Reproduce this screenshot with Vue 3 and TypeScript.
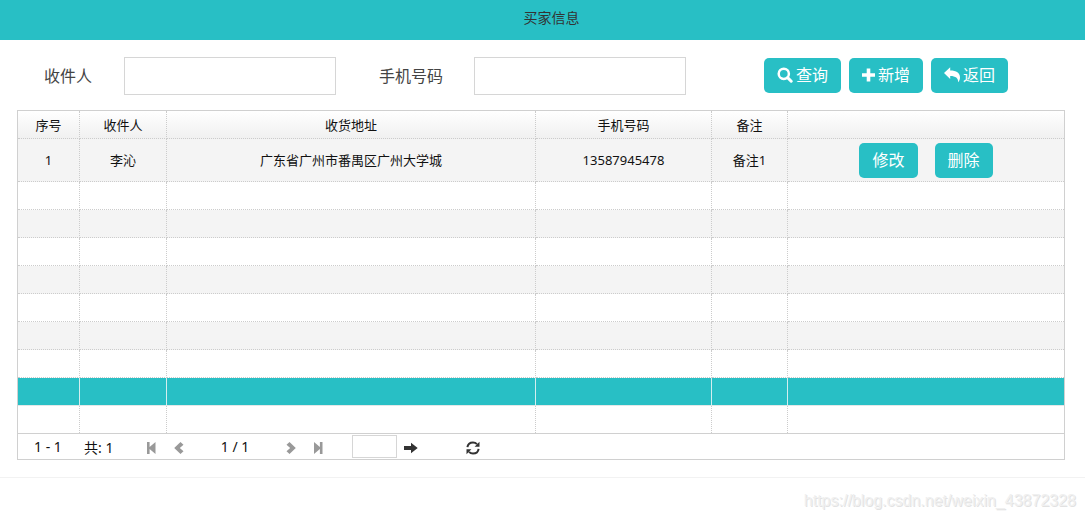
<script setup lang="ts">
import { ref } from 'vue'

interface Buyer {
  id: number
  name: string
  address: string
  phone: string
  remark: string
}

const recipient = ref('')
const phone = ref('')
const targetPage = ref('')
const highlighted = 8
const blankRows = 9
const columns: string[] = ['序号', '收件人', '收货地址', '手机号码', '备注', '']
const buyers: Buyer[] = [
  { id: 1, name: '李沁', address: '广东省广州市番禺区广州大学城', phone: '13587945478', remark: '备注1' },
]
</script>

<template>
  <div class="page">
    <header class="title-bar"><h1>买家信息</h1></header>

    <form class="search" @submit.prevent>
      <label for="recipient">收件人</label>
      <input id="recipient" v-model="recipient" type="text" />
      <label for="phone" class="second">手机号码</label>
      <input id="phone" v-model="phone" type="text" />
      <div class="tools">
        <button type="submit" class="btn">
          <svg width="16" height="16" viewBox="0 0 16 16" aria-hidden="true">
            <circle cx="6.8" cy="6.8" r="5.1" fill="none" stroke="#fff" stroke-width="2.5" />
            <path d="M10.6 10.6 14.2 14.2" stroke="#fff" stroke-width="3" stroke-linecap="round" />
          </svg>查询
        </button>
        <button type="button" class="btn">
          <svg width="13" height="16" viewBox="0 0 13 16" aria-hidden="true">
            <path d="M4.7 1.5h3.6v4.7H13v3.6H8.3v4.7H4.7V9.8H0V6.2h4.7z" fill="#fff" />
          </svg>新增
        </button>
        <button type="button" class="btn">
          <svg width="16" height="16" viewBox="0 0 16 16" aria-hidden="true">
            <path d="M0 5.9 6.2.2v3.400c6.200 0 9.800 2.400 9.800 6.900 0 1.900-.6 3.300-1.900 4.700.3-4.300-2.500-6.200-7.900-6.300v3.200z" fill="#fff" />
          </svg>返回
        </button>
      </div>
    </form>

    <section class="panel">
      <table>
        <colgroup>
          <col class="c-no" /><col class="c-name" /><col class="c-address" />
          <col class="c-phone" /><col class="c-remark" /><col class="c-actions" />
        </colgroup>
        <thead>
          <tr><th v-for="(column, i) in columns" :key="i" scope="col">{{ column }}</th></tr>
        </thead>
        <tbody>
          <tr v-for="buyer in buyers" :key="buyer.id" class="filled">
            <td>{{ buyer.id }}</td>
            <td>{{ buyer.name }}</td>
            <td>{{ buyer.address }}</td>
            <td>{{ buyer.phone }}</td>
            <td>{{ buyer.remark }}</td>
            <td>
              <div class="actions">
                <button type="button" class="btn">修改</button>
                <button type="button" class="btn">删除</button>
              </div>
            </td>
          </tr>
          <tr v-for="n in blankRows" :key="'blank' + n" :class="{ active: n === highlighted }">
            <td v-for="(column, i) in columns" :key="i"></td>
          </tr>
        </tbody>
      </table>

      <nav class="pager" aria-label="分页">
        <span class="range">1 - 1</span>
        <span class="total">共: 1</span>
        <button type="button" class="icon" aria-label="首页">
          <svg width="10" height="12" viewBox="0 0 10 12"><path d="M1 0h2.600v5L9.500 0v12L3.600 7v5H1z" fill="#999" /></svg>
        </button>
        <button type="button" class="icon prev" aria-label="上一页">
          <svg width="10" height="12" viewBox="0 0 10 12"><path d="M6.500 0 9.500 2.700 5.800 6 9.500 9.300 6.500 12 .2 6z" fill="#999" /></svg>
        </button>
        <span class="current">1 / 1</span>
        <button type="button" class="icon" aria-label="下一页">
          <svg width="10" height="12" viewBox="0 0 10 12"><path d="M3.500 0 .5 2.700 4.200 6 .5 9.300 3.500 12 9.800 6z" fill="#999" /></svg>
        </button>
        <button type="button" class="icon last" aria-label="末页">
          <svg width="10" height="12" viewBox="0 0 10 12"><path d="M9.500 0H6.900v5L1 0v12l5.900-5v5h2.600z" fill="#999" /></svg>
        </button>
        <input v-model="targetPage" type="text" aria-label="页码" />
        <button type="button" class="icon go" aria-label="跳转">
          <svg width="14" height="12" viewBox="0 0 14 12"><path d="M0 4h7V.7L13.700 6 7 11.300V8H0z" fill="#333" /></svg>
        </button>
        <button type="button" class="icon refresh" aria-label="刷新">
          <svg width="14" height="14" viewBox="0 0 14 14">
            <path d="M1.400 6.200C1.800 3.300 4.200 1.500 7 1.500c1.700 0 3 .6 4 1.600M12.600 7.800C12.200 10.700 9.800 12.500 7 12.500c-1.700 0-3-.6-4-1.600" fill="none" stroke="#333" stroke-width="2" />
            <path d="M13.500.8v4.900H8.600zM.5 13.200V8.300h4.900z" fill="#333" />
          </svg>
        </button>
      </nav>
    </section>

    <footer class="foot">https://blog.csdn.net/weixin_43872328</footer>
  </div>
</template>

<style>
body {
  margin: 0;
  background: #fff;
}
</style>

<style scoped>
.page {
  font-family: "Noto Sans", "Noto Sans CJK SC", sans-serif;
  font-size: 13px;
  color: #111;
}
.page * {
  box-sizing: border-box;
}
.title-bar {
  height: 40px;
  background: #28bfc5;
}
h1 {
  margin: 0;
  padding-left: 18px;
  line-height: 36px;
  text-align: center;
  font-size: 14px;
  font-weight: 400;
  color: #333;
}
.search {
  display: flex;
  align-items: center;
  padding: 17px 77px 15px 44px;
  font-size: 16px;
  line-height: 24px;
  color: #444;
}
.search label {
  flex: 0 0 80px;
}
.search label.second {
  flex-basis: 95px;
  margin-left: 43px;
}
input {
  min-width: 0;
  padding: 0 8px;
  border: 1px solid #d6d6d6;
  background: #fff;
  font: inherit;
  color: inherit;
}
.search input {
  flex: 1;
  height: 38px;
}
.tools {
  display: flex;
  gap: 8px;
  margin-left: 78px;
  padding-bottom: 2px;
}
button {
  margin: 0;
  border: 0;
  font: inherit;
  cursor: pointer;
}
.btn {
  display: flex;
  align-items: center;
  gap: 3px;
  height: 35px;
  padding: 0 13px;
  border-radius: 5px;
  background: #28bfc5;
  font-size: 16px;
  line-height: 24px;
  color: #fff;
  white-space: nowrap;
}
.panel {
  margin: 0 20px 17px 17px;
  border: 1px solid #d0d0d0;
}
table {
  width: 100%;
  table-layout: fixed;
  border-spacing: 0;
}
.c-no { width: 62px; }
.c-name { width: 87px; }
.c-phone { width: 176px; }
.c-remark { width: 76px; }
.c-actions { width: 276px; }
th,
td {
  height: 28px;
  padding: 0;
  border-right: 1px dotted #ccc;
  border-bottom: 1px dotted #ccc;
  line-height: 20px;
  text-align: center;
  font-weight: 400;
}
th:last-child,
td:last-child {
  border-right: 0;
}
thead tr {
  background: linear-gradient(#fff, #f0f0f0);
}
tbody tr {
  background: #fff;
}
tbody tr:nth-child(odd) {
  background: #f4f4f4;
}
tbody tr.active {
  background: #28bfc5;
}
tbody tr.active td {
  border-right: 1px solid #d4eeef;
  border-bottom: 1px solid #e2e8e8;
}
tbody tr.active td:last-child {
  border-right: 0;
}
tbody tr:last-child td {
  height: 27px;
  border-bottom: 0;
}
tbody tr.filled td {
  height: 43px;
}
.actions {
  display: flex;
  justify-content: center;
  gap: 17px;
}
.pager {
  display: flex;
  align-items: center;
  height: 26px;
  padding-left: 16px;
  border-top: 1px solid #d0d0d0;
  font-size: 14px;
}
.range {
  width: 50px;
}
.total {
  width: 62px;
}
.icon {
  display: flex;
  padding: 2px 0 0;
  background: none;
}
.prev {
  margin-left: 18px;
}
.current {
  width: 102px;
  text-align: center;
}
.last {
  margin-left: 17px;
}
.pager input {
  width: 45px;
  height: 23px;
  margin-left: 29px;
}
.go {
  margin-left: 7px;
}
.refresh {
  margin-left: 48px;
}
.foot {
  padding: 12px 9px 0;
  border-top: 1px solid #f2f2f2;
  text-align: right;
  font-family: "Liberation Sans", Arial, sans-serif;
  font-size: 16px;
  line-height: 22px;
  color: #f0f0f0;
  text-shadow: 1px 1px 0 #e2e2e2;
}
</style>
